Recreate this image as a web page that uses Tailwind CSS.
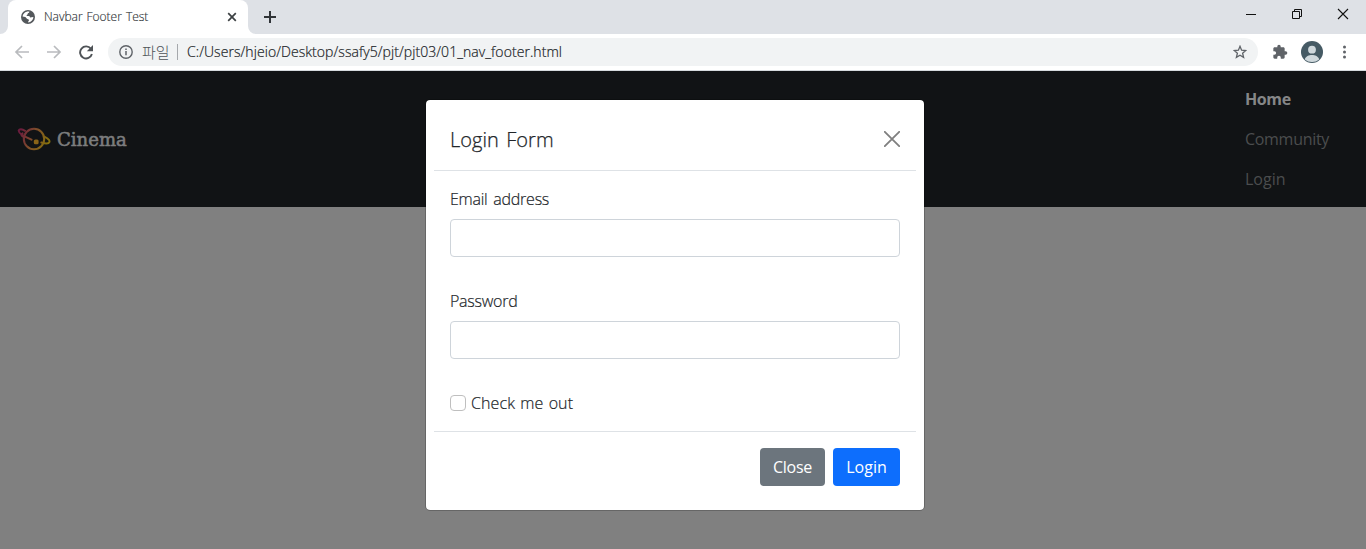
<!DOCTYPE html>
<html lang="ko">
<head>
<meta charset="utf-8">
<title>Navbar Footer Test</title>
<script src="https://cdn.jsdelivr.net/npm/@tailwindcss/browser@4"></script>
</head>
<body class="w-[1366px] h-[549px] overflow-hidden bg-white font-['Open_Sans','Noto_Sans_CJK_KR',sans-serif] text-[#212529]">
<div class="flex h-[549px] flex-col">
  <!-- tab strip -->
  <div class="flex h-[34px] shrink-0 bg-[#dee1e6]">
    <div class="relative ml-2 flex h-[34px] w-[240px] items-center rounded-t-lg bg-white pl-[13px] pr-2">
      <svg class="absolute -left-2 bottom-0 size-2" viewBox="0 0 8 8"><path fill="#fff" d="M8 0v8H0a8 8 0 0 0 8-8z"/></svg>
      <svg class="absolute -right-2 bottom-0 size-2" viewBox="0 0 8 8"><path fill="#fff" d="M0 0v8h8a8 8 0 0 1-8-8z"/></svg>
      <svg class="size-[14px] shrink-0" viewBox="0 0 14 14"><circle cx="7" cy="7" r="7" fill="#54585c"/><path fill="#fff" d="M8.300 1.600c.2 1-.6 1.500-1.400 1.700-.4 1-.2 1.500-1.200 1.600-.4.7.2 1.200 1.300 1.200 1.200 0 2 .4 2.100 1.400 1 0 1.900-.3 3.300-.4-.1 2.900-2.200 4.900-4.700 5.300-.8-.3-.7-1.200.2-1.700.1-1-.4-1.600-1.600-1.700-1-.3-1-1.700-2-2L1.600 6.400c.4-2.900 3.200-5.400 6.700-4.800z"/></svg>
      <span class="ml-[9px] whitespace-nowrap text-xs font-light text-[#303438] [-webkit-text-stroke:0.15px_#303438]"><span class="tracking-[-0.03px] [word-spacing:1px]">Navbar Footer Test</span></span>
      <svg class="ml-auto size-[16px]" viewBox="0 0 16 16"><path d="M4.200 4.200l7.600 7.600M11.800 4.200l-7.600 7.600" stroke="#3c4043" stroke-width="1.700"/></svg>
    </div>
    <svg class="ml-[14px] mt-[9px] size-4" viewBox="0 0 16 16"><path d="M8 2v12M2 8h12" stroke="#303438" stroke-width="2"/></svg>
    <div class="ml-auto mr-[17px] mt-2 flex gap-[34px]">
      <svg class="size-3" viewBox="0 0 12 12"><path d="M1 6.500h10" stroke="#111"/></svg>
      <svg class="size-3" viewBox="0 0 12 12" fill="none" stroke="#111"><path d="M1.500 3.500h7v7h-7zM3.500 3.500v-2h7v7h-2"/></svg>
      <svg class="size-3" viewBox="0 0 12 12"><path d="M1 1l10 10M11 1L1 11" stroke="#111" stroke-width="1.100"/></svg>
    </div>
  </div>
  <!-- toolbar -->
  <div class="flex h-[37px] shrink-0 items-center border-b border-[#d5dadd] pl-[14px] pr-[13px]">
    <svg class="size-4" viewBox="0 0 16 16" fill="none" stroke="#b9bbbe" stroke-width="1.700"><path d="M15 8H2M8 2L2 8l6 6"/></svg>
    <svg class="ml-4 size-4" viewBox="0 0 16 16" fill="none" stroke="#b9bbbe" stroke-width="1.700"><path d="M1 8h13M8 2l6 6-6 6"/></svg>
    <svg class="ml-4 size-4" viewBox="0 0 16 16"><path d="M12.900 4.800A6 6 0 1 0 13.900 10" fill="none" stroke="#4f5357" stroke-width="1.900"/><path d="M15 1v6.200H8.800z" fill="#4f5357"/></svg>
    <div class="ml-[14px] flex h-7 w-[1150px] items-center rounded-full bg-[#f1f3f4] pl-[11px] pr-[11px]">
      <svg class="size-[14px]" viewBox="0 0 14 14"><circle cx="7" cy="7" r="6.200" fill="none" stroke="#5f6368" stroke-width="1.400"/><path d="M7 6v4.300M7 3.500v1.500" stroke="#5f6368" stroke-width="1.500"/></svg>
      <span class="ml-[9px] w-[28px] whitespace-nowrap font-['Noto_Sans_CJK_KR',sans-serif] text-[15px] font-light leading-5 text-[#4f5358]">파일</span>
      <span class="ml-[7px] h-4 w-px bg-[#a5a8ac]"></span>
      <span class="ml-[9px] whitespace-nowrap text-sm font-light text-[#202327] [-webkit-text-stroke:0.2px_#202327]"><span class="tracking-[0.06px]">C:/Users/hjeio/Desktop/ssafy5/pjt/pjt03/01_nav_footer.html</span></span>
      <svg class="ml-auto size-[14px]" viewBox="0 0 14 14"><path d="M7 1.300l1.600 3.900 4.200.3-3.200 2.700 1 4.200L7 10.200l-3.600 2.200 1-4.200L1.200 5.500l4.200-.3z" fill="none" stroke="#5f6368" stroke-width="1.300"/></svg>
    </div>
    <svg class="ml-[14px] size-4" viewBox="0 0 24 24"><path fill="#5f6368" d="M20.500 11H19V7c0-1.100-.9-2-2-2h-4V3.500a2.500 2.500 0 0 0-5 0V5H4c-1.100 0-2 .9-2 2v3.800h1.500a2.700 2.700 0 0 1 0 5.400H2V20c0 1.100.9 2 2 2h3.800v-1.500a2.700 2.700 0 0 1 5.400 0V22H17c1.100 0 2-.9 2-2v-4h1.500a2.500 2.500 0 0 0 0-5z"/></svg>
    <svg class="ml-[13px] size-[22px]" viewBox="0 0 22 22"><circle cx="11" cy="11" r="11" fill="#455a64"/><circle cx="11" cy="8.700" r="3.900" fill="#cfd8dc"/><path fill="#cfd8dc" d="M3.800 18.500C4.500 15.500 8 14.100 11 14.100s6.500 1.400 7.200 4.400A11 11 0 0 1 11 21a11 11 0 0 1-7.200-2.500z"/></svg>
    <svg class="ml-[13px] size-4" viewBox="0 0 16 16" fill="#5f6368"><circle cx="8.500" cy="3" r="1.500"/><circle cx="8.500" cy="8" r="1.500"/><circle cx="8.500" cy="13" r="1.500"/></svg>
  </div>
  <!-- dimmed page and dialog -->
  <main class="relative flex-1 bg-[#808080]">
    <nav class="flex h-[136px] items-center justify-between bg-[#111315] pl-[17px]">
      <div class="flex items-center">
        <svg class="h-6 w-9" viewBox="0 0 36 24" fill="none" stroke-width="2" stroke-linecap="round">
          <defs><linearGradient id="planet" gradientUnits="userSpaceOnUse" x1="3" y1="4" x2="31" y2="16"><stop offset="0" stop-color="#6c1c3e"/><stop offset=".5" stop-color="#80502a"/><stop offset="1" stop-color="#86700c"/></linearGradient></defs>
          <g stroke="url(#planet)"><circle cx="17" cy="12" r="10.200"/><path d="M8 3.800C5 1.900 2.400 1.900 1.800 3.300c-.9 2.500 5.100 6 12.700 9.400"/><path d="M5.500 6.400C3.800 7.300 4.300 9 6 9.600"/><path d="M27.300 9.700c4 2 5.700 4.200 5.100 5.500-.8 1.700-4.400 1.500-8.100.3"/></g>
          <rect x="16.800" y="12.600" width="4.800" height="4.600" rx="1.500" fill="#8a6418"/>
        </svg>
        <span class="ml-1 font-['DejaVu_Serif',serif] text-[19px] leading-6 text-[#7c7d7e] [-webkit-text-stroke:0.6px_#7c7d7e]"><span class="inline-block origin-left scale-x-[.95]">Cinema</span></span>
      </div>
      <ul class="flex w-[121px] flex-col text-base leading-6 text-[#4b4d4e]">
        <li class="py-2 font-bold text-[#858687]"><span class="tracking-[-0.4px]">Home</span></li>
        <li class="py-2"><span class="tracking-[-0.3px]">Community</span></li>
        <li class="py-2"><span>Login</span></li>
      </ul>
    </nav>
    <section class="absolute left-[426px] top-[29px] flex h-[410px] w-[498px] flex-col rounded-[4px] bg-white px-2 outline outline-black/20">
      <header class="flex h-[71px] items-center justify-between border-b border-[#dee2e6] px-4 pt-2">
        <h5 class="mt-px text-xl font-light [-webkit-text-stroke:0.25px_#212529]"><span class="tracking-[0.05px] [word-spacing:2px]">Login Form</span></h5>
        <svg class="size-4" viewBox="0 0 16 16"><path d="M.8.8l14.400 14.400M15.200.8L.8 15.200" stroke="#7f7f7f" stroke-width="1.800" stroke-linecap="round"/></svg>
      </header>
      <form class="flex h-[260px] flex-col px-4 pt-4 text-base font-light leading-6 [-webkit-text-stroke:0.2px_#212529]">
        <label><span class="tracking-[-0.25px] [word-spacing:2px]">Email address</span></label>
        <div class="mt-2 h-[38px] shrink-0 rounded-[4px] border border-[#ced4da]"></div>
        <label class="mt-8"><span class="tracking-[-0.25px]">Password</span></label>
        <div class="mt-2 h-[38px] shrink-0 rounded-[4px] border border-[#ced4da]"></div>
        <div class="mt-8 flex items-center"><span class="size-4 rounded-[4px] border border-[#bfbfbf]"></span><span class="ml-[5px] whitespace-nowrap tracking-[0.1px] [word-spacing:1px]">Check me out</span></div>
      </form>
      <footer class="flex justify-end gap-2 border-t border-[#dee2e6] px-4 pt-4 text-base leading-6 text-white">
        <button class="h-[38px] w-[65px] rounded-[4px] bg-[#6c757d]"><span class="tracking-[-0.3px]">Close</span></button>
        <button class="h-[38px] w-[67px] rounded-[4px] bg-[#0d6efd]"><span>Login</span></button>
      </footer>
    </section>
  </main>
</div>
</body>
</html>
